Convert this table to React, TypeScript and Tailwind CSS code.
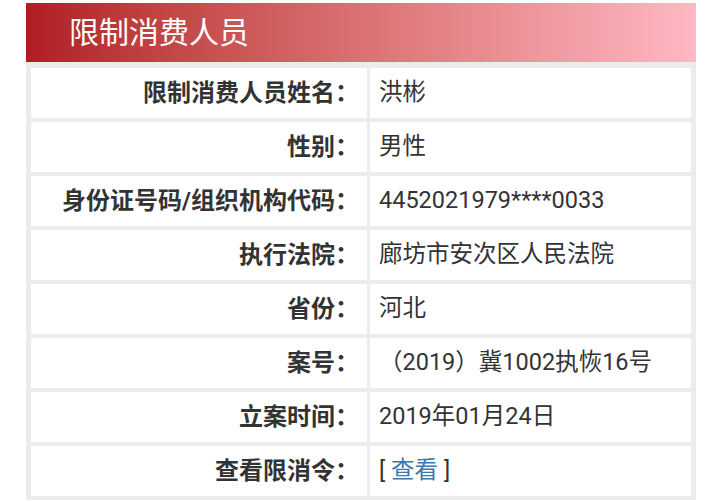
import React from 'react';

// Restricted-consumption person detail card
const rows: { label: string; value: React.ReactNode }[] = [
  { label: '限制消费人员姓名：', value: '洪彬' },
  { label: '性别：', value: '男性' },
  { label: '身份证号码/组织机构代码：', value: '4452021979****0033' },
  { label: '执行法院：', value: '廊坊市安次区人民法院' },
  { label: '省份：', value: '河北' },
  { label: '案号：', value: '（2019）冀1002执恢16号' },
  { label: '立案时间：', value: '2019年01月24日' },
  {
    label: '查看限消令：',
    value: (
      <span>
        [ <a href="#" className="text-[#3b78b0]">查看</a> ]
      </span>
    ),
  },
];

const App: React.FC = () => {
  return (
    <div
      className="w-[720px] h-[502px] bg-white overflow-hidden"
      style={{ fontFamily: 'Roboto, "Noto Sans CJK SC", sans-serif' }}
    >
      <div className="ml-[26px] mt-[3px] w-[670px]">
        {/* Title band */}
        <div className="h-[59px] flex items-center pl-[43px] bg-gradient-to-r from-[#b01c22] to-[#ffb8c4]">
          <span className="text-[30px] text-white leading-none">限制消费人员</span>
        </div>

        {/* Detail table */}
        <div className="bg-[#ececec] pt-[6px] px-[5px] pb-[4px] flex flex-col gap-[4px]">
          {rows.map((row) => (
            <div key={row.label} className="flex gap-[3px] h-[50px]">
              <div className="w-[336px] bg-white flex items-center justify-end pr-[8px] text-[24px] font-bold text-[#333]">
                {row.label}
              </div>
              <div className="flex-1 bg-white flex items-center pl-[9px] text-[23.5px] text-[#333]">
                {row.value}
              </div>
            </div>
          ))}
        </div>
      </div>
    </div>
  );
};

export default App;
